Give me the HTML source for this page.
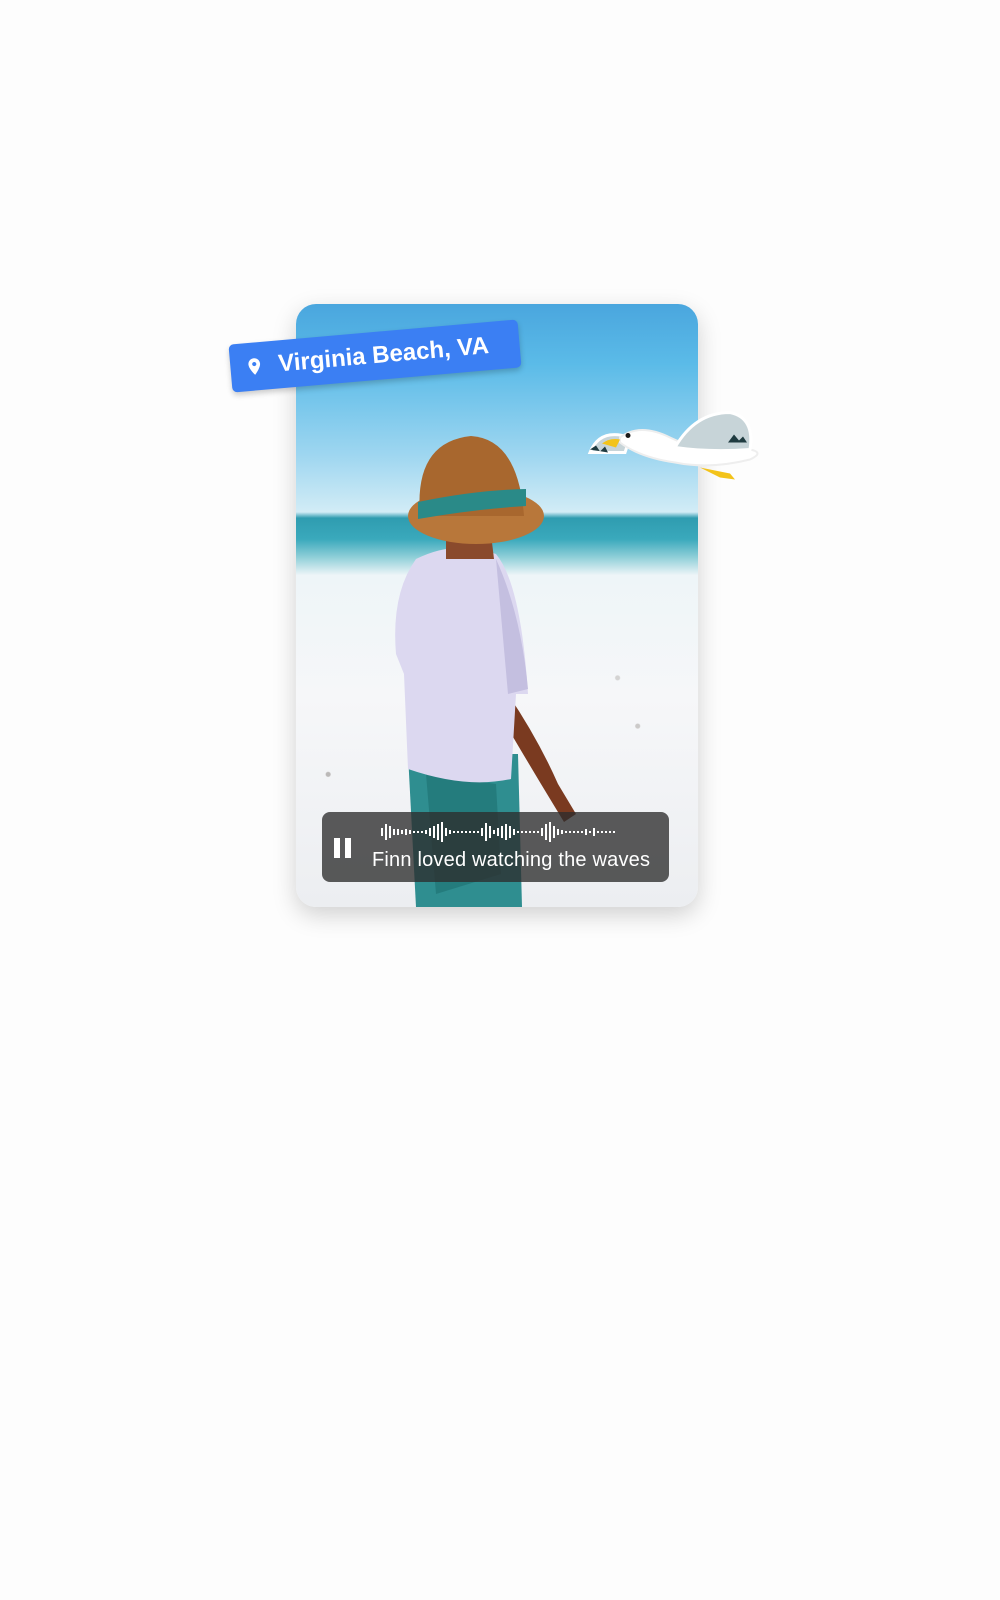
<!DOCTYPE html>
<html><head><meta charset="utf-8"><style>
body{margin:0;width:1000px;height:1600px;background:#fdfdfd;position:relative;overflow:hidden;font-family:"Liberation Sans",Arial,sans-serif}
.card{position:absolute;left:296px;top:304px;width:402px;height:603px;border-radius:20px;overflow:hidden;box-shadow:0 8px 24px rgba(0,0,0,.18);
background:linear-gradient(180deg,#4aa6de 0%,#5bbbe8 10%,#9ed6f0 25%,#d2ecf6 34.5%,#2f9cb0 35.5%,#3aa9bc 39%,#8fcfd8 42%,#eef5f8 45%,#f6f7f9 65%,#eceef1 100%)}
.speck{position:absolute;inset:0;background:radial-gradient(circle at 30% 80%,rgba(80,70,60,.25) 0 2px,transparent 3px),radial-gradient(circle at 85% 70%,rgba(80,70,60,.25) 0 2px,transparent 3px),radial-gradient(circle at 8% 78%,rgba(60,50,40,.3) 0 2px,transparent 3px),radial-gradient(circle at 80% 62%,rgba(80,70,60,.2) 0 2px,transparent 3px)}
.cap{position:absolute;left:26px;top:508px;width:347px;height:70px;border-radius:8px;background:rgba(45,45,45,.78)}
.cap .t{position:absolute;left:50px;top:37px;color:#fff;font-size:20px;letter-spacing:.2px;white-space:nowrap}
.tag{position:absolute;left:230px;top:332px;width:290px;height:48px;background:#3b7ff3;border-radius:5px;transform:rotate(-5deg);box-shadow:0 3px 6px rgba(0,0,0,.2);color:#fff;font-size:24px;font-weight:bold;line-height:48px}
</style></head><body>
<div class="card">
<div class="speck"></div>
<svg width="402" height="603" style="position:absolute;left:0;top:0">
<path d="M205 380 Q240 430 262 480 L280 510 L268 518 L245 480 Q215 430 198 400Z" fill="#7a3a20"/>
<path d="M112 450 L222 450 L226 603 L120 603 Z" fill="#2f8e90"/>
<path d="M130 470 L200 480 L205 570 L140 590Z" fill="#1e6f72" opacity=".6"/>
<path d="M120 255 Q160 235 200 250 Q225 280 232 390 L220 390 L215 475 Q170 485 112 465 L108 370 L100 350 Q95 290 120 255Z" fill="#dcd8f0"/>
<path d="M200 255 Q225 310 232 385 L212 390 Z" fill="#c4bfe0"/>
<path d="M150 230 L195 230 L198 255 L150 255Z" fill="#8a4a2c"/>
<ellipse cx="180" cy="212" rx="68" ry="28" fill="#b8773a"/>
<path d="M124 212 Q118 138 175 132 Q222 135 228 212Z" fill="#a8672e"/>
<path d="M122 198 Q180 186 230 185 L230 202 Q180 205 122 215Z" fill="#2a8a88"/>
</svg>
<div class="cap">
<svg width="30" height="30" style="position:absolute;left:8px;top:22px"><rect x="4" y="4" width="6" height="20" fill="#fff"/><rect x="15" y="4" width="6" height="20" fill="#fff"/></svg>
<svg width="270" height="28" style="position:absolute;left:52px;top:6px" stroke="#fff" stroke-width="2">
<path d="M4 14v0M8 10v8M12 6v16M16 8v12M20 11v6M24 11v6M28 12v4M32 11v6M36 12v4M40 13v2M44 13v2M48 13v2M52 12v4M56 10v8M60 8v12M64 6v16M68 4v20M72 10v8M76 12v4M80 13v2M84 13v2M88 13v2M92 13v2M96 13v2M100 13v2M104 13v2M108 10v8M112 5v18M116 8v12M120 12v4M124 10v8M128 8v12M132 6v16M136 8v12M140 11v6M144 13v2M148 13v2M152 13v2M156 13v2M160 13v2M164 13v2M168 10v8M172 6v16M176 4v20M180 8v12M184 11v6M188 12v4M192 13v2M196 13v2M200 13v2M204 13v2M208 13v2M212 11v6M216 13v2M220 10v8M224 13v2M228 13v2M232 13v2M236 13v2M240 13v2"/>
</svg>
<div class="t">Finn loved watching the waves</div>
</div>
</div>
<div class="tag"><svg width="20" height="26" style="position:absolute;left:14px;top:11px" viewBox="0 0 24 24"><path d="M12 2C8.1 2 5 5.1 5 9c0 5.2 7 13 7 13s7-7.8 7-13c0-3.9-3.1-7-7-7zm0 9.5A2.5 2.5 0 1 1 12 6.5a2.5 2.5 0 0 1 0 5z" fill="#fff"/></svg><span style="position:absolute;left:48px">Virginia Beach, VA</span></div>
<svg width="200" height="85" style="position:absolute;left:580px;top:405px" viewBox="0 0 200 80">
<path d="M10 45 Q20 20 50 30 L45 45Z" fill="#c7d4d8" stroke="#fff" stroke-width="3"/>
<path d="M10 42 l6 -4 l4 6 l5 -5 l3 6Z" fill="#1f3b40"/>
<path d="M40 30 Q60 15 90 30 Q120 45 170 42 Q185 45 170 52 Q130 62 95 55 Q60 50 40 35Z" fill="#fff" stroke="#eee" stroke-width="2"/>
<path d="M95 40 Q115 5 150 5 Q175 10 170 42 Q130 45 95 40Z" fill="#c7d4d8" stroke="#fff" stroke-width="3"/>
<path d="M148 35 l6 -8 l5 6 l4 -4 l4 6Z" fill="#1f3b40"/>
<path d="M22 36 Q30 30 40 32 L36 40Z" fill="#f3c31a"/>
<circle cx="48" cy="28" r="2.5" fill="#1a1a1a"/>
<path d="M120 60 L140 70 L155 72 L150 66Z" fill="#f3c31a"/>
</svg>
</body></html>
